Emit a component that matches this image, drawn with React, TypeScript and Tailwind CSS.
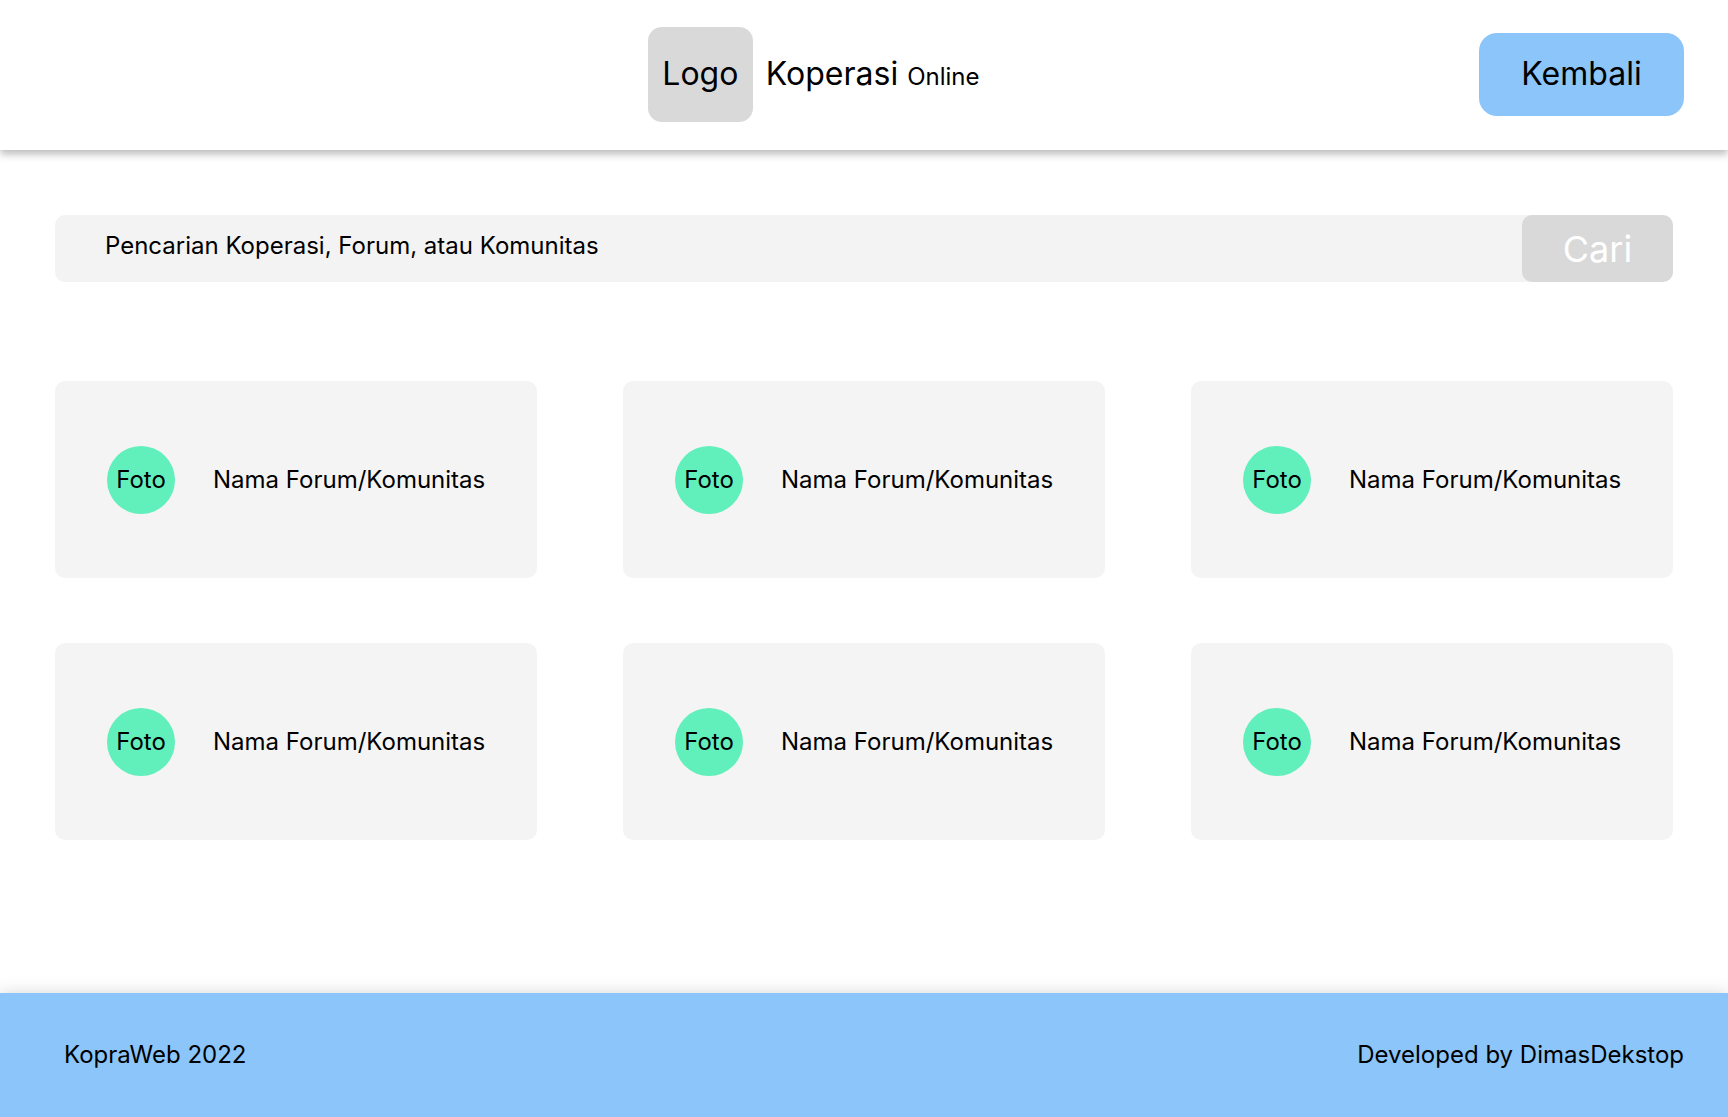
const forums = Array.from({ length: 6 }, (_, id) => ({
  id,
  photo: 'Foto',
  name: 'Nama Forum/Komunitas',
}));

function Header() {
  return (
    <header className="flex h-[150px] items-center bg-white px-11 pb-px shadow-[0_4px_8px_rgba(0,0,0,0.28)]">
      <div className="flex-[6]" />
      <div className="flex items-center gap-[13px]">
        <div className="flex h-[95px] w-[105px] items-center justify-center rounded-[14px] bg-[#d9d9d9] text-[32px]">
          Logo
        </div>
        <h1 className="whitespace-nowrap text-[32px]">
          Koperasi <span className="text-2xl">Online</span>
        </h1>
      </div>
      <div className="flex flex-[7] justify-end">
        <button type="button" className="h-[83px] w-[205px] rounded-[18px] bg-[#8cc5fa] text-[32px]">
          Kembali
        </button>
      </div>
    </header>
  );
}

function SearchBar() {
  return (
    <form className="flex h-[67px] rounded-[10px] bg-[#f3f3f3]" onSubmit={(e) => e.preventDefault()}>
      <input
        type="search"
        aria-label="Pencarian Koperasi, Forum, atau Komunitas"
        placeholder="Pencarian Koperasi, Forum, atau Komunitas"
        className="min-w-0 flex-1 bg-transparent pb-1.5 pl-[50px] text-2xl outline-none placeholder:text-black placeholder:opacity-100"
      />
      <button type="submit" className="w-[151px] rounded-[10px] bg-[#d9d9d9] text-4xl text-white">
        Cari
      </button>
    </form>
  );
}

function ForumCard({ photo, name }: { photo: string; name: string }) {
  return (
    <li className="flex h-[197px] items-center gap-[38px] rounded-[10px] bg-[#f4f4f4] px-[52px]">
      <div className="flex size-[68px] shrink-0 items-center justify-center rounded-full bg-[#61efbb]">
        {photo}
      </div>
      <h2 className="whitespace-nowrap">{name}</h2>
    </li>
  );
}

export default function App() {
  return (
    <div className="flex min-h-screen flex-col bg-white font-['Inter',sans-serif] text-2xl text-black">
      <Header />
      <main className="flex-1 px-[55px] pt-[65px] pb-16">
        <SearchBar />
        <ul className="mt-[99px] grid grid-cols-3 gap-x-[86px] gap-y-[65px]">
          {forums.map((forum) => (
            <ForumCard key={forum.id} photo={forum.photo} name={forum.name} />
          ))}
        </ul>
      </main>
      <footer className="flex h-[124px] items-center justify-between bg-[#8cc5fa] pr-11 pl-16 shadow-[0_4px_18px_rgba(0,0,0,0.25)]">
        <p>KopraWeb 2022</p>
        <p>Developed by DimasDekstop</p>
      </footer>
    </div>
  );
}
